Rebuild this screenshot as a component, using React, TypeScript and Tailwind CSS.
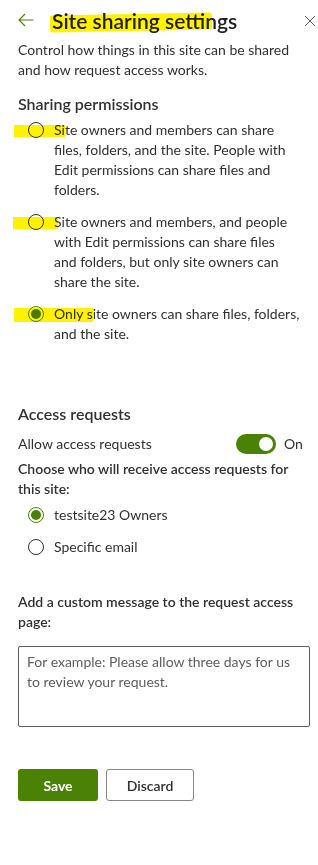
import React from "react";

const font = { fontFamily: '"Segoe UI", Lato, "Liberation Sans", sans-serif' };

function Radio({ checked }: { checked?: boolean }) {
  return (
    <span
      className={`relative flex h-4 w-4 shrink-0 items-center justify-center rounded-full border ${
        checked ? "border-[#498205]" : "border-[#323130]"
      } bg-white`}
    >
      {checked && <span className="h-2.5 w-2.5 rounded-full bg-[#498205]" />}
    </span>
  );
}

function Hl({ className }: { className: string }) {
  return <span className={`pointer-events-none absolute bg-[#fff200] mix-blend-multiply ${className}`} />;
}

export default function App() {
  return (
    <div className="relative min-h-[865px] w-[318px] bg-white text-[#323130]" style={font}>
      {/* header */}
      <div className="box-content flex h-[26px] items-center pl-[18px] pr-[1px] pt-[8px]">
        <svg width="16" height="14" viewBox="0 0 16 14" className="-mt-[2px] shrink-0">
          <path d="M15.5 7H1M7 1L1 7l6 6" fill="none" stroke="#498205" strokeWidth="1.1" />
        </svg>
        <span className="ml-[18px] text-[21px] font-semibold leading-[26px] text-[#201f1e]">Site sharing settings</span>
        <svg width="12" height="12" viewBox="0 0 12 12" className="ml-auto mr-[1px] shrink-0">
          <path d="M1 1l10 10M11 1L1 11" stroke="#605e5c" strokeWidth="1" />
        </svg>
      </div>

      <div className="px-[18px]">
        <p className="mt-[6px] text-[14px] leading-[20px]">
          Control how things in this site can be shared and how request access works.
        </p>

        <h2 className="mt-[13px] text-[16px] font-semibold leading-[22px]">Sharing permissions</h2>

        <div className="mt-[5px] flex flex-col gap-[12px]">
          <div className="flex pr-[10px]">
            <div className="flex w-[36px] shrink-0 justify-center pt-[2px]">
              <Radio />
            </div>
            <p className="text-[14px] leading-[20px]">
              Site owners and members can share files, folders, and the site. People with Edit permissions can share files and folders.
            </p>
          </div>
          <div className="flex pr-[10px]">
            <div className="flex w-[36px] shrink-0 justify-center pt-[2px]">
              <Radio />
            </div>
            <p className="text-[14px] leading-[20px]">
              Site owners and members, and people with Edit permissions can share files and folders, but only site owners can share the site.
            </p>
          </div>
          <div className="flex">
            <div className="flex w-[36px] shrink-0 justify-center pt-[2px]">
              <Radio checked />
            </div>
            <p className="text-[14px] leading-[20px]">Only site owners can share files, folders, and the site.</p>
          </div>
        </div>

        <h2 className="mt-[59px] text-[16px] font-semibold leading-[22px]">Access requests</h2>

        <div className="mt-[9px] flex items-center">
          <span className="text-[14px] leading-[20px]">Allow access requests</span>
          <span className="ml-auto flex h-[20px] w-[40px] items-center justify-end rounded-full bg-[#498205] pr-[3px]">
            <span className="h-[14px] w-[14px] rounded-full bg-white" />
          </span>
          <span className="-mr-[1px] ml-[8px] w-[17px] text-[14px] leading-[20px]">On</span>
        </div>

        <p className="mt-[5px] text-[14px] font-semibold leading-[20px]">
          Choose who will receive access requests for this site:
        </p>

        <div className="mt-[6px] flex flex-col gap-[12px]">
          <div className="flex items-center">
            <div className="flex w-[36px] shrink-0 justify-center">
              <Radio checked />
            </div>
            <span className="text-[14px] leading-[20px]">testsite23 Owners</span>
          </div>
          <div className="flex items-center">
            <div className="flex w-[36px] shrink-0 justify-center">
              <Radio />
            </div>
            <span className="text-[14px] leading-[20px]">Specific email</span>
          </div>
        </div>

        <p className="mt-[35px] text-[14px] font-semibold leading-[20px]">
          Add a custom message to the request access page:
        </p>

        <div className="mt-[14px] h-[81px] w-[292px] rounded-[2px] border border-[#605e5c] px-[8px] pt-[5px]">
          <p className="text-[14px] leading-[20px] text-[#605e5c]">
            For example: Please allow three days for us to review your request.
          </p>
        </div>

        <div className="mt-[42px] flex gap-[8px]">
          <button
            className="h-[32px] w-[80px] rounded-[3px] bg-[#498205] text-[14px] font-bold text-white"
            style={{ fontFamily: 'Lato, "Segoe UI", sans-serif' }}
          >
            Save
          </button>
          <button
            className="h-[32px] w-[88px] rounded-[3px] border border-[#8a8886] bg-white text-[14px] font-semibold text-[#323130]"
            style={{ fontFamily: 'Lato, "Segoe UI", sans-serif' }}
          >
            Discard
          </button>
        </div>
      </div>

      {/* marker highlights (annotations drawn over the screenshot) */}
      <Hl className="left-[50px] top-[14px] h-[17px] w-[162px] -rotate-[1deg] rounded-[2px]" />
      <Hl className="left-[14px] top-[125px] h-[12px] w-[51px]" />
      <Hl className="left-[13px] top-[217px] h-[12px] w-[45px]" />
      <Hl className="left-[14px] top-[308px] h-[14px] w-[79px]" />
    </div>
  );
}
